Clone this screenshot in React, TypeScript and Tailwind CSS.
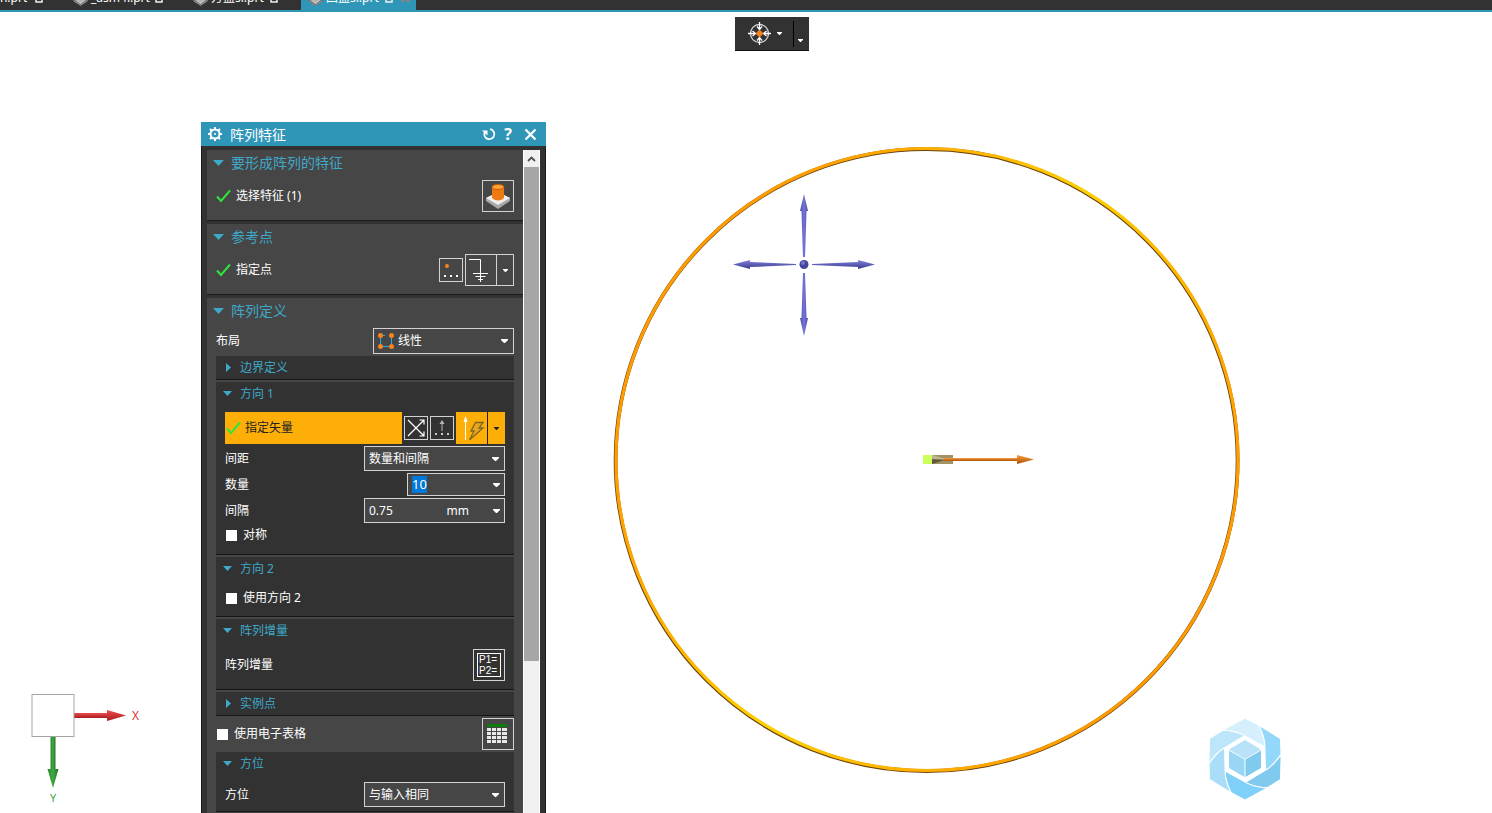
import { useEffect, useRef, useState } from "react";
import type { ReactNode } from "react";

function Caret({ className = "" }: { className?: string }) {
  return (
    <svg width="7" height="4" viewBox="0 0 7 4" className={className} aria-hidden="true">
      <path d="M0 0h7v1L4 4H3L0 1z" fill="currentColor" />
    </svg>
  );
}

function Check() {
  return (
    <svg width="15" height="14" viewBox="0 0 15 14" className="shrink-0" aria-hidden="true">
      <path d="M1 7.500 5 12 14 1.500" fill="none" stroke="#2ee53b" strokeWidth="2" />
    </svg>
  );
}

function PartIcon() {
  return (
    <svg width="15" height="16" viewBox="0 0 15 16" className="shrink-0" aria-hidden="true">
      <path d="M0 5 7.500 2 15 5v6L7.500 16 0 11z" fill="#707070" />
      <path d="m1 8 6.500 5L14 8" fill="none" stroke="#c9c9c9" strokeWidth="1.500" />
      <path d="M4 6h7v4l-3.500 2L4 10z" fill="#b5b5b5" />
      <path d="m1 11 6.500 4 6.500-4" fill="none" stroke="#8f8f8f" />
    </svg>
  );
}

function SavedIcon() {
  return (
    <svg width="8" height="10" viewBox="0 0 8 10" className="shrink-0" aria-hidden="true">
      <path d="M1 1h3l3 3v5H1z" fill="none" stroke="#f0f0f0" strokeWidth="1.500" />
      <path d="M4 2v4h3" fill="none" stroke="#f0f0f0" strokeWidth="1.500" />
    </svg>
  );
}

type TabProps = {
  name: string;
  className: string;
  active?: boolean;
};

function FileTab({ name, className, active = false }: TabProps) {
  return (
    <button
      type="button"
      className={`flex h-6 shrink-0 items-center text-xs text-white ${className}`}
    >
      <PartIcon />
      <span className="ml-[3px] whitespace-nowrap">{name}</span>
      <span className="ml-auto">
        <SavedIcon />
      </span>
      {active ? (
        <svg width="9" height="9" viewBox="0 0 9 9" className="ml-2 shrink-0" aria-hidden="true">
          <path d="m1 1 7 7M8 1 1 8" stroke="#9a8078" strokeWidth="2" />
        </svg>
      ) : null}
    </button>
  );
}

function TabBar() {
  return (
    <nav className="flex h-3 shrink-0 items-end overflow-hidden border-b-2 border-[#3096b8] bg-[#323232]">
      <FileTab name="rn.prt" className="-ml-[30px] w-[96px] pr-[23px] pl-[7px]" />
      <FileTab name="_asm4l.prt" className="w-[120px] pr-[23px] pl-[7px]" />
      <FileTab name="方盖sl.prt" className="w-[115px] pr-[23px] pl-[7px]" />
      <FileTab name="四盖sl.prt" className="w-[115px] bg-[#3096b8] pr-[6px] pl-[7px]" active />
    </nav>
  );
}

function SnapToolbar() {
  return (
    <div className="absolute top-[5px] left-1/2 -ml-[11px] flex h-[34px] w-[74px] items-center border-b border-[#111] bg-[#323232] text-white">
      <button
        type="button"
        aria-label="定向视图"
        className="flex w-[58px] items-center gap-[5px] pl-3"
      >
        <svg width="25" height="25" viewBox="0 0 25 25" aria-hidden="true">
          <circle cx="12.500" cy="12.500" r="9" fill="none" stroke="#d8d8d8" strokeWidth="1.300" />
          <path
            d="M12.500 1v7M12.500 17v7M1 12.500h7M17 12.500h7"
            stroke="#fff"
            strokeWidth="1.300"
          />
          <path
            d="m10 5.500 2.500 3 2.500-3M10 19.500l2.500-3 2.500 3M5.500 10l3 2.500-3 2.500M19.500 10l-3 2.500 3 2.500"
            fill="none"
            stroke="#fff"
            strokeWidth="1.300"
          />
          <path d="m12.500 8.500 4 4-4 4-4-4z" fill="#f58220" />
        </svg>
        <Caret className="h-[3px] w-[5px]" />
      </button>
      <button
        type="button"
        aria-label="工具条选项"
        className="flex h-[26px] w-4 items-end border-l border-black pb-[5px] pl-1"
      >
        <Caret className="h-[3px] w-[5px]" />
      </button>
    </div>
  );
}

function Scene() {
  return (
    <svg
      viewBox="0 0 640 640"
      className="absolute top-[128px] left-1/2 -ml-[139px] h-[640px] w-[640px]"
      aria-hidden="true"
    >
      <defs>
        <linearGradient id="ring" x1="0" y1="0.2" x2="1" y2="0.8">
          <stop offset="0.1" stopColor="#ff9a00" />
          <stop offset="0.3" stopColor="#ffb000" />
          <stop offset="0.5" stopColor="#ffd000" />
          <stop offset="0.7" stopColor="#ffb000" />
          <stop offset="0.9" stopColor="#ff9a00" />
        </linearGradient>
        <linearGradient id="shaft" x1="0" y1="0" x2="0" y2="1">
          <stop offset="0" stopColor="#ff9b3d" />
          <stop offset="1" stopColor="#a85208" />
        </linearGradient>
        <linearGradient id="horizontal" x1="0" y1="0" x2="0" y2="1">
          <stop offset="0" stopColor="#8484e0" />
          <stop offset="1" stopColor="#38388c" />
        </linearGradient>
        <linearGradient id="vertical" x1="0" y1="0" x2="1" y2="0">
          <stop offset="0" stopColor="#4848a0" />
          <stop offset="0.5" stopColor="#7676dc" />
          <stop offset="1" stopColor="#4848a0" />
        </linearGradient>
      </defs>

      {/* rim shadow falls down and to the left of the tube */}
      <circle cx="319.600" cy="320.200" r="311" fill="none" stroke="#6b430c" strokeWidth="3.800" />
      <circle cx="320" cy="319.500" r="311" fill="none" stroke="url(#ring)" strokeWidth="3.200" />

      <g fill="url(#vertical)">
        <path d="M197 54 201 71H199.500L198 117H196L194.500 71H193z" />
        <path d="M197 196 193 178H194.500L196 133H198L199.500 178H201z" />
      </g>
      <g fill="url(#horizontal)">
        <path d="M126 124.500 143 120V122L189 124V125L143 127V129z" />
        <path d="M268 124.500 251 120V122L205 124V125L251 127V129z" />
      </g>
      <circle cx="197" cy="124.500" r="4.500" fill="#44449a" />
      <circle cx="196" cy="123" r="2" fill="#7474d0" />

      <rect x="316" y="315" width="9" height="9" fill="#ccff5c" />
      <rect x="325" y="315" width="21" height="9" fill="#a19366" />
      <path d="m325 315 14 4-14 1z" fill="#c0b58c" />
      <path d="m325 319 13 1-13 4z" fill="#625838" />
      <rect x="337" y="318" width="73" height="3" fill="url(#shaft)" />
      <path d="m410 315 17 4.500-17 4.500z" fill="url(#shaft)" />
    </svg>
  );
}

function Triad() {
  return (
    <svg
      width="120"
      height="120"
      viewBox="0 0 120 120"
      className="absolute bottom-[3px] left-[25px]"
      aria-hidden="true"
    >
      <defs>
        <linearGradient id="axis-x" x1="0" y1="0" x2="0" y2="1">
          <stop offset="0" stopColor="#ee4b4b" />
          <stop offset="1" stopColor="#a81c24" />
        </linearGradient>
        <linearGradient id="axis-y" x1="0" y1="0" x2="1" y2="0">
          <stop offset="0" stopColor="#2b8a30" />
          <stop offset="0.5" stopColor="#3fa843" />
          <stop offset="1" stopColor="#217326" />
        </linearGradient>
      </defs>
      <rect x="49" y="23" width="34" height="5" fill="url(#axis-x)" />
      <path d="m82 20 19 5.500L82 31z" fill="url(#axis-x)" />
      <rect x="25.500" y="47" width="5" height="34" fill="url(#axis-y)" />
      <path d="m22.500 79 5.500 19 5.500-19z" fill="url(#axis-y)" />
      <rect x="7" y="4.500" width="42" height="42" fill="#fff" stroke="#a5a5a5" />
      <text x="107" y="30" fontSize="12" fill="#d9363c">
        X
      </text>
      <text x="25" y="112" fontSize="11" fill="#3fa843">
        Y
      </text>
    </svg>
  );
}

const blades = [
  { angle: 0, fill: "#d6effc" },
  { angle: 60, fill: "#93d8fa" },
  { angle: 120, fill: "#80caf0" },
  { angle: 180, fill: "#7fd1f9" },
  { angle: 240, fill: "#a9ddf8" },
  { angle: 300, fill: "#bde6fb" },
];

function Watermark() {
  return (
    <svg
      width="72"
      height="82"
      viewBox="0 0 72 82"
      className="absolute right-[211px] bottom-[13px]"
      aria-hidden="true"
    >
      {blades.map((blade) => (
        <path
          key={blade.angle}
          d="M14 12 36 0 50 7.500Q56 20 56 29L36 18Q28 13 14 12z"
          transform={`rotate(${blade.angle} 36 41)`}
          fill={blade.fill}
          stroke="#fff"
        />
      ))}
      <path d="m36 18 20 11.500v23L36 64 16 52.500v-23z" fill="#fff" />
      <path d="m36 22 16 9.500-16 9.500-16-9.500z" fill="#b9e2f8" />
      <path d="m20 32.500 15.500 9V59L20 50z" fill="#9ad5f5" />
      <path d="m52 32.500-15.500 9V59L52 50z" fill="#80caf0" />
    </svg>
  );
}

type SectionProps = {
  title: string;
  children: ReactNode;
};

function Section({ title, children }: SectionProps) {
  return (
    <section className="border-b border-[#1c1c1c] bg-[#464646] pr-[9px] pb-2 pl-[9px]">
      <h2 className="flex h-[26px] items-center text-sm text-[#3fa9c9]">
        <svg width="11" height="6" viewBox="0 0 11 6" className="-ml-[3px]" aria-hidden="true">
          <path d="M0 0h11L5.500 6z" fill="currentColor" />
        </svg>
        <span className="ml-[7px]">{title}</span>
      </h2>
      {children}
    </section>
  );
}

type GroupProps = {
  title: string;
  open?: boolean;
  children?: ReactNode;
};

function Group({ title, open = true, children }: GroupProps) {
  return (
    <section className="border-b border-[#151515] bg-[#323232] px-[9px]">
      <h3 className="flex h-[23px] items-center text-xs text-[#3fa9c9]">
        {open ? (
          <svg width="9" height="5" viewBox="0 0 9 5" aria-hidden="true" className="-ml-[2px]">
            <path d="M0 0h9L4.500 5z" fill="currentColor" />
          </svg>
        ) : (
          <svg width="9" height="9" viewBox="0 0 9 9" aria-hidden="true" className="-ml-[2px]">
            <path d="M3 0v9l5-4.500z" fill="currentColor" />
          </svg>
        )}
        <span className="ml-2">{title}</span>
      </h3>
      {children}
    </section>
  );
}

type SelectProps = {
  id: string;
  value: string;
  className: string;
  icon?: ReactNode;
};

function SelectBox({ id, value, className, icon }: SelectProps) {
  return (
    <span className={`relative flex items-center border border-[#d2d2d2] ${className}`}>
      {icon}
      <select
        id={id}
        defaultValue={value}
        className="h-full min-w-0 flex-1 appearance-none bg-transparent px-1 text-white outline-none"
      >
        <option>{value}</option>
      </select>
      <Caret className="pointer-events-none absolute right-[5px]" />
    </span>
  );
}

type TickProps = {
  id: string;
  label: string;
};

function Tick({ id, label }: TickProps) {
  return (
    <label htmlFor={id} className="flex items-center gap-1.5 pl-px">
      <input id={id} type="checkbox" className="size-[11px] appearance-none bg-white" />
      {label}
    </label>
  );
}

function LinearIcon() {
  return (
    <svg width="16" height="16" viewBox="0 0 16 16" className="ml-1 shrink-0" aria-hidden="true">
      <path d="M2.500 2.500v11h11v-11" fill="none" stroke="#15b4ea" />
      <path d="M5 2.500h2" stroke="#15b4ea" />
      <g fill="#f5831f">
        <circle cx="2.500" cy="2.500" r="2.500" />
        <circle cx="13.500" cy="2.500" r="2.500" />
        <circle cx="2.500" cy="13.500" r="2.500" />
        <circle cx="13.500" cy="13.500" r="2.500" />
      </g>
    </svg>
  );
}

function PatternDialog() {
  const countRef = useRef<HTMLInputElement>(null);
  const [count, setCount] = useState("10");
  const [pitch, setPitch] = useState("0.75");

  useEffect(() => {
    countRef.current?.focus();
    countRef.current?.select();
  }, []);

  return (
    <div
      role="dialog"
      aria-labelledby="dialog-title"
      className="absolute top-[110px] bottom-0 left-[201px] flex w-[345px] flex-col overflow-hidden bg-[#323232] text-xs text-white"
    >
      <header className="flex h-6 shrink-0 items-center bg-[#3096b8] pr-[9px] pl-[7px]">
        <svg width="14" height="14" viewBox="0 0 14 14" aria-hidden="true">
          <circle cx="7" cy="7" r="4.500" fill="none" stroke="#fff" strokeWidth="2" />
          <circle cx="7" cy="7" r="1" fill="#fff" />
          <path
            d="M7 0v2.500M7 11.500V14M0 7h2.500M11.500 7H14M2 2l1.800 1.800M10.200 10.200 12 12M12 2l-1.800 1.800M3.800 10.200 2 12"
            stroke="#fff"
            strokeWidth="2"
          />
        </svg>
        <h1 id="dialog-title" className="ml-2 flex-1 pt-0.5 text-sm">
          阵列特征
        </h1>
        <button type="button" aria-label="重置">
          <svg width="14" height="14" viewBox="0 0 14 14" aria-hidden="true">
            <path d="M8 2.200A5 5 0 1 1 2.800 5" fill="none" stroke="#fff" strokeWidth="1.800" />
            <path d="M0 3.500h5.500v5z" fill="#fff" />
          </svg>
        </button>
        <button type="button" className="ml-2 w-2 text-base font-bold">
          ?
        </button>
        <button type="button" aria-label="关闭" className="ml-3">
          <svg width="13" height="13" viewBox="0 0 13 13" aria-hidden="true">
            <path d="m1.500 1.500 10 10M11.500 1.500l-10 10" stroke="#fff" strokeWidth="2.200" />
          </svg>
        </button>
      </header>

      <div className="flex min-h-0 flex-1 border-x border-[#1a1a1a] pt-1 pr-[5px] pl-[5px]">
        <div className="flex min-w-0 flex-1 flex-col gap-[3px] overflow-hidden *:shrink-0">
          <Section title="要形成阵列的特征">
            <div className="mt-1 flex h-8 items-center">
              <Check />
              <span className="ml-[5px] flex-1">选择特征 (1)</span>
              <button
                type="button"
                aria-label="选择特征"
                className="flex size-8 items-center justify-center border border-[#d2d2d2]"
              >
                <svg width="26" height="26" viewBox="0 0 26 26" aria-hidden="true">
                  <path d="m1 15 12-6 12 6v3l-12 8-12-8z" fill="#a8a8a8" />
                  <path d="m1 15 12-6 12 6-12 7z" fill="#efefef" />
                  <path d="M7 4v11q6 5 12 0V4z" fill="#ee7b12" />
                  <ellipse cx="13" cy="4" rx="6" ry="2.500" fill="#ffa235" stroke="#c65f08" />
                </svg>
              </button>
            </div>
          </Section>

          <Section title="参考点">
            <div className="mt-1 flex h-8 items-center">
              <Check />
              <span className="ml-[5px] flex-1">指定点</span>
              <button
                type="button"
                aria-label="点对话框"
                className="size-6 border border-[#d2d2d2]"
              >
                <svg width="22" height="22" viewBox="0 0 22 22" aria-hidden="true">
                  <circle cx="7" cy="7" r="2" fill="#f5831f" />
                  <path d="M4 16h2v2H4zM10 16h2v2h-2zM16 16h2v2h-2z" fill="#fff" />
                </svg>
              </button>
              <button
                type="button"
                aria-label="指定点"
                className="ml-0.5 size-8 border border-[#d2d2d2]"
              >
                <svg width="30" height="30" viewBox="0 0 30 30" aria-hidden="true">
                  <path
                    d="M3 4.500h11.500V27M7 18.500h15M9.500 21.500h10M12 24.500h5"
                    fill="none"
                    stroke="#fff"
                  />
                </svg>
              </button>
              <button
                type="button"
                aria-label="点选项"
                className="flex h-8 w-[17px] items-center justify-center border border-l-0 border-[#d2d2d2]"
              >
                <Caret className="h-[3px] w-[5px]" />
              </button>
            </div>
          </Section>

          <Section title="阵列定义">
            <div className="mt-1 flex h-[26px] items-center justify-between">
              <label htmlFor="layout">布局</label>
              <SelectBox
                id="layout"
                value="线性"
                className="h-[26px] w-[141px] bg-[#464646]"
                icon={<LinearIcon />}
              />
            </div>

            <div className="mt-0.5 flex flex-col gap-0.5">
              <Group title="边界定义" open={false} />

              <Group title="方向 1">
                <div className="mt-[7px] flex h-8 items-center">
                  <div className="flex h-8 flex-1 items-center gap-1 bg-[#fdaf08] pl-px text-[#222]">
                    <Check />
                    指定矢量
                  </div>
                  <button
                    type="button"
                    aria-label="反向"
                    className="ml-0.5 size-6 border border-[#d2d2d2]"
                  >
                    <svg width="22" height="22" viewBox="0 0 22 22" aria-hidden="true">
                      <path
                        d="m3 3 16 16M3 19 19 3M14.500 3H19v4.500M14.500 19H19v-4.500"
                        fill="none"
                        stroke="#fff"
                        strokeWidth="1.200"
                      />
                    </svg>
                  </button>
                  <button
                    type="button"
                    aria-label="矢量对话框"
                    className="ml-0.5 size-6 border border-[#d2d2d2]"
                  >
                    <svg width="22" height="22" viewBox="0 0 22 22" aria-hidden="true">
                      <path d="M11 4v10" stroke="#b5b5b5" />
                      <path d="m8.500 7 2.500-4 2.500 4z" fill="#b5b5b5" />
                      <path d="M4 16h2v2H4zM10 16h2v2h-2zM16 16h2v2h-2z" fill="#c8c8c8" />
                    </svg>
                  </button>
                  <button
                    type="button"
                    aria-label="自动判断的矢量"
                    className="ml-0.5 h-8 w-[31px] bg-[#fdaf08]"
                  >
                    <svg width="31" height="32" viewBox="0 0 31 32" aria-hidden="true">
                      <path d="M9.500 28V8" stroke="#fff" />
                      <path d="m7.500 10 2-6 2 6z" fill="#fff" />
                      <path
                        d="M19.500 10.500h7.500l-4 5.500h4L13.500 28l4.500-9h-3z"
                        fill="#e8a61c"
                        stroke="#7d6528"
                        strokeWidth="1.300"
                      />
                    </svg>
                  </button>
                  <button
                    type="button"
                    aria-label="矢量选项"
                    className="flex h-8 w-[18px] items-center justify-center border-l border-[#222] bg-[#fdaf08] text-[#222]"
                  >
                    <Caret className="h-[3px] w-[5px]" />
                  </button>
                </div>
                <div className="mt-0.5 flex h-[25px] items-center justify-between">
                  <label htmlFor="spacing">间距</label>
                  <SelectBox
                    id="spacing"
                    value="数量和间隔"
                    className="h-[25px] w-[141px] bg-[#464646]"
                  />
                </div>
                <div className="mt-0.5 flex h-[23px] items-center justify-between">
                  <label htmlFor="count">数量</label>
                  <span className="flex h-[23px] w-[98px] items-center border border-[#d2d2d2] bg-[#464646] px-1">
                    <input
                      id="count"
                      ref={countRef}
                      value={count}
                      onChange={(e) => setCount(e.target.value)}
                      className="min-w-0 flex-1 bg-transparent text-[13px] outline-none selection:bg-[#0078d7] selection:text-white"
                    />
                    <button type="button" aria-label="数量选项">
                      <Caret />
                    </button>
                  </span>
                </div>
                <div className="mt-0.5 flex h-[25px] items-center justify-between">
                  <label htmlFor="pitch">间隔</label>
                  <span className="flex h-[25px] w-[141px] items-center border border-[#d2d2d2] bg-[#464646] px-1">
                    <input
                      id="pitch"
                      value={pitch}
                      onChange={(e) => setPitch(e.target.value)}
                      className="min-w-0 flex-1 bg-transparent outline-none"
                    />
                    <span className="mr-6">mm</span>
                    <button type="button" aria-label="间隔选项">
                      <Caret />
                    </button>
                  </span>
                </div>
                <div className="flex h-[31px] items-start pt-1">
                  <Tick id="symmetric" label="对称" />
                </div>
              </Group>

              <Group title="方向 2">
                <div className="flex h-9 items-center">
                  <Tick id="use-second" label="使用方向 2" />
                </div>
              </Group>

              <Group title="阵列增量">
                <div className="mb-px flex h-[46px] items-center justify-between">
                  <span>阵列增量</span>
                  <button
                    type="button"
                    aria-label="阵列增量"
                    className="flex size-8 items-center justify-center border border-[#d2d2d2]"
                  >
                    <span className="flex size-6 flex-col border border-white pl-px text-left font-['Liberation_Sans',sans-serif] text-[10px] leading-[11px]">
                      <span>P1=</span>
                      <span>P2=</span>
                    </span>
                  </button>
                </div>
              </Group>

              <Group title="实例点" open={false} />
            </div>

            <div className="mt-0.5 flex h-8 items-center justify-between">
              <Tick id="spreadsheet" label="使用电子表格" />
              <button
                type="button"
                aria-label="电子表格"
                className="flex size-8 items-center border border-[#d2d2d2] pl-1"
              >
                <svg width="20" height="20" viewBox="0 0 20 20" aria-hidden="true">
                  <path d="M0 0h20v3H0z" fill="#0a7d0a" />
                  <path d="M0 4h20v15H0z" fill="#e8e8e8" />
                  <path
                    d="M0 7.500h20M0 11.500h20M0 15.500h20M4.500 4v16M9.500 4v16M14.500 4v16"
                    stroke="#464646"
                  />
                </svg>
              </button>
            </div>

            <div className="mt-0.5 flex flex-col gap-0.5">
              <Group title="方位">
                <div className="flex h-9 items-end justify-between pb-1">
                  <label htmlFor="orientation" className="leading-[25px]">
                    方位
                  </label>
                  <SelectBox
                    id="orientation"
                    value="与输入相同"
                    className="h-[25px] w-[141px] bg-[#464646]"
                  />
                </div>
              </Group>
            </div>
          </Section>
        </div>

        <div className="flex w-[17px] shrink-0 flex-col items-stretch border-x border-white bg-[#f0f0f0]">
          <button
            type="button"
            aria-label="向上滚动"
            className="flex h-[17px] items-center justify-center"
          >
            <svg width="9" height="6" viewBox="0 0 9 6" aria-hidden="true">
              <path d="m1 5 3.500-3.500L8 5" fill="none" stroke="#505050" strokeWidth="1.800" />
            </svg>
          </button>
          <div className="h-[494px] bg-[#a6a6a6]" />
        </div>
      </div>
    </div>
  );
}

export default function App() {
  return (
    <div className="flex h-screen flex-col overflow-hidden bg-white font-['Noto_Sans','Noto_Sans_CJK_SC',sans-serif]">
      <TabBar />
      <main className="relative flex-1">
        <SnapToolbar />
        <Scene />
        <Triad />
        <Watermark />
        <PatternDialog />
      </main>
    </div>
  );
}
